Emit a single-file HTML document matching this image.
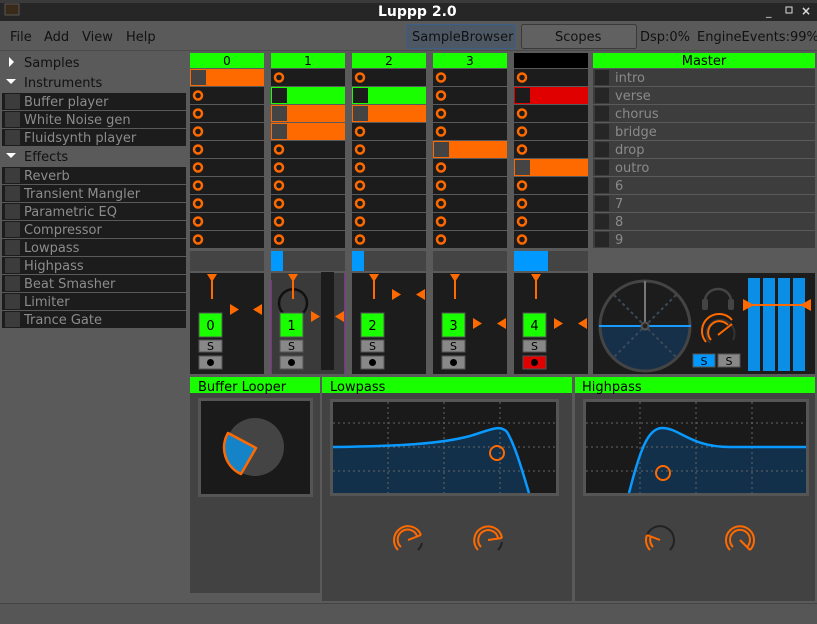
<!DOCTYPE html>
<html><head><meta charset="utf-8"><style>
html,body{margin:0;padding:0;width:817px;height:624px;overflow:hidden;background:#5a5a5a;font-family:"DejaVu Sans","Liberation Sans",sans-serif;}
svg{display:block}
</style></head><body>
<svg width="817" height="624" xmlns="http://www.w3.org/2000/svg" font-family="DejaVu Sans, Liberation Sans, sans-serif">
<defs>
<g id="e"><rect width="74" height="17" fill="#1c1c1c"/><circle cx="8" cy="8.5" r="4" fill="none" stroke="#ff6a00" stroke-width="2.5"/></g>
<g id="m"><rect width="222" height="17" fill="#3d3d3d"/><rect x="2" y="1" width="14" height="15" fill="#262626"/></g>
<g id="li"><rect width="184" height="17" fill="#1c1c1c"/><rect x="3" y="1" width="15" height="15" fill="#3c3c3c"/></g>
</defs>
<!-- title bar -->
<rect width="817" height="21" fill="#262626"/>
<rect x="0" y="0" width="817" height="3" fill="#3a3a3a"/>
<rect x="5" y="4" width="14" height="11" fill="#3a2a1a" stroke="#555"/>
<text x="378" y="16" fill="#fff" font-size="14" font-weight="bold" font-family="DejaVu Sans, sans-serif">Luppp 2.0</text>
<text x="766" y="15" fill="#ddd" font-size="11">_</text>
<rect x="786" y="7" width="6" height="6" fill="none" stroke="#ddd"/>
<text x="801" y="15" fill="#ddd" font-size="12" font-weight="bold">×</text>
<!-- menu -->
<rect x="0" y="22" width="817" height="28" fill="#5a5a5a"/>
<text x="10" y="41" font-size="13" fill="#111">File</text>
<text x="44" y="41" font-size="13" fill="#111">Add</text>
<text x="82" y="41" font-size="13" fill="#111">View</text>
<text x="126" y="41" font-size="13" fill="#111">Help</text>
<rect x="406.5" y="24.5" width="109" height="24" rx="2" fill="#4e5864" stroke="#3a5f8a"/>
<text x="412" y="41" font-size="13" fill="#111">SampleBrowser</text>
<rect x="521.5" y="24.5" width="115" height="24" rx="2" fill="#616161" stroke="#3a3a3a"/>
<text x="555" y="41" font-size="13" fill="#111">Scopes</text>
<text x="640" y="41" font-size="13" fill="#111">Dsp:0%</text>
<text x="697" y="41" font-size="13" fill="#111">EngineEvents:99%</text>
<line x1="0" y1="50.5" x2="817" y2="50.5" stroke="#4a4a4a"/>
<!-- left tree -->
<polygon points="9,57 9,67 14,62" fill="#fff"/>
<text x="24" y="67" font-size="13" fill="#111">Samples</text>
<polygon points="6,79 16,79 11,84" fill="#fff"/>
<text x="24" y="87" font-size="13" fill="#111">Instruments</text>
<use href="#li" x="2" y="93"/><text x="24" y="106" font-size="13" fill="#8c8c8c">Buffer player</text>
<use href="#li" x="2" y="111"/><text x="24" y="124" font-size="13" fill="#8c8c8c">White Noise gen</text>
<use href="#li" x="2" y="129"/><text x="24" y="142" font-size="13" fill="#8c8c8c">Fluidsynth player</text>
<polygon points="6,153 16,153 11,158" fill="#fff"/>
<text x="24" y="161" font-size="13" fill="#111">Effects</text>
<use href="#li" x="2" y="167"/><text x="24" y="180" font-size="13" fill="#8c8c8c">Reverb</text>
<use href="#li" x="2" y="185"/><text x="24" y="198" font-size="13" fill="#8c8c8c">Transient Mangler</text>
<use href="#li" x="2" y="203"/><text x="24" y="216" font-size="13" fill="#8c8c8c">Parametric EQ</text>
<use href="#li" x="2" y="221"/><text x="24" y="234" font-size="13" fill="#8c8c8c">Compressor</text>
<use href="#li" x="2" y="239"/><text x="24" y="252" font-size="13" fill="#8c8c8c">Lowpass</text>
<use href="#li" x="2" y="257"/><text x="24" y="270" font-size="13" fill="#8c8c8c">Highpass</text>
<use href="#li" x="2" y="275"/><text x="24" y="288" font-size="13" fill="#8c8c8c">Beat Smasher</text>
<use href="#li" x="2" y="293"/><text x="24" y="306" font-size="13" fill="#8c8c8c">Limiter</text>
<use href="#li" x="2" y="311"/><text x="24" y="324" font-size="13" fill="#8c8c8c">Trance Gate</text>
<!-- track headers -->
<g font-size="12" text-anchor="middle" fill="#000">
<rect x="190" y="53" width="74" height="15" fill="#1aff00"/><text x="227" y="65">0</text>
<rect x="271" y="53" width="74" height="15" fill="#1aff00"/><text x="308" y="65">1</text>
<rect x="352" y="53" width="74" height="15" fill="#1aff00"/><text x="389" y="65">2</text>
<rect x="433" y="53" width="74" height="15" fill="#1aff00"/><text x="470" y="65">3</text>
<rect x="514" y="53" width="74" height="15" fill="#000"/>
<rect x="593" y="53" width="222" height="15" fill="#1aff00"/><text x="704" y="65" font-size="13">Master</text>
</g>
<!-- clips col0 -->
<rect x="190" y="69" width="74" height="17" fill="#ff6a00"/><rect x="191" y="70" width="15" height="15" fill="#444"/>
<use href="#e" x="190" y="87"/><use href="#e" x="190" y="105"/><use href="#e" x="190" y="123"/><use href="#e" x="190" y="141"/><use href="#e" x="190" y="159"/><use href="#e" x="190" y="177"/><use href="#e" x="190" y="195"/><use href="#e" x="190" y="213"/><use href="#e" x="190" y="231"/>
<!-- col1 -->
<use href="#e" x="271" y="69"/>
<rect x="271" y="87" width="74" height="17" fill="#1aff00"/><rect x="272" y="88" width="15" height="15" fill="#1c1c1c"/>
<rect x="271" y="105" width="74" height="17" fill="#ff6a00"/><rect x="272" y="106" width="15" height="15" fill="#444"/>
<rect x="271" y="123" width="74" height="17" fill="#ff6a00"/><rect x="272" y="124" width="15" height="15" fill="#444"/>
<use href="#e" x="271" y="141"/><use href="#e" x="271" y="159"/><use href="#e" x="271" y="177"/><use href="#e" x="271" y="195"/><use href="#e" x="271" y="213"/><use href="#e" x="271" y="231"/>
<!-- col2 -->
<use href="#e" x="352" y="69"/>
<rect x="352" y="87" width="74" height="17" fill="#1aff00"/><rect x="353" y="88" width="15" height="15" fill="#1c1c1c"/>
<rect x="352" y="105" width="74" height="17" fill="#ff6a00"/><rect x="353" y="106" width="15" height="15" fill="#444"/>
<use href="#e" x="352" y="123"/><use href="#e" x="352" y="141"/><use href="#e" x="352" y="159"/><use href="#e" x="352" y="177"/><use href="#e" x="352" y="195"/><use href="#e" x="352" y="213"/><use href="#e" x="352" y="231"/>
<!-- col3 -->
<use href="#e" x="433" y="69"/><use href="#e" x="433" y="87"/><use href="#e" x="433" y="105"/><use href="#e" x="433" y="123"/>
<rect x="433" y="141" width="74" height="17" fill="#ff6a00"/><rect x="434" y="142" width="15" height="15" fill="#444"/>
<use href="#e" x="433" y="159"/><use href="#e" x="433" y="177"/><use href="#e" x="433" y="195"/><use href="#e" x="433" y="213"/><use href="#e" x="433" y="231"/>
<!-- col4 -->
<use href="#e" x="514" y="69"/>
<rect x="514" y="87" width="74" height="17" fill="#e00000"/><rect x="515" y="88" width="15" height="15" fill="#1c1c1c"/>
<use href="#e" x="514" y="105"/><use href="#e" x="514" y="123"/><use href="#e" x="514" y="141"/>
<rect x="514" y="159" width="74" height="17" fill="#ff6a00"/><rect x="515" y="160" width="15" height="15" fill="#444"/>
<use href="#e" x="514" y="177"/><use href="#e" x="514" y="195"/><use href="#e" x="514" y="213"/><use href="#e" x="514" y="231"/>
<!-- master scenes -->
<g font-size="13" fill="#8a8a8a">
<use href="#m" x="593" y="69"/><text x="615" y="82">intro</text>
<use href="#m" x="593" y="87"/><text x="615" y="100">verse</text>
<use href="#m" x="593" y="105"/><text x="615" y="118">chorus</text>
<use href="#m" x="593" y="123"/><text x="615" y="136">bridge</text>
<use href="#m" x="593" y="141"/><text x="615" y="154">drop</text>
<use href="#m" x="593" y="159"/><text x="615" y="172">outro</text>
<use href="#m" x="593" y="177"/><text x="615" y="190">6</text>
<use href="#m" x="593" y="195"/><text x="615" y="208">7</text>
<use href="#m" x="593" y="213"/><text x="615" y="226">8</text>
<use href="#m" x="593" y="231"/><text x="615" y="244">9</text>
</g>
<!-- progress row -->
<rect x="190" y="251" width="74" height="20" fill="#444"/>
<rect x="271" y="251" width="74" height="20" fill="#444"/><rect x="271" y="251" width="12" height="20" fill="#0099ff"/>
<rect x="352" y="251" width="74" height="20" fill="#444"/><rect x="352" y="251" width="12" height="20" fill="#0099ff"/>
<rect x="433" y="251" width="74" height="20" fill="#444"/>
<rect x="514" y="251" width="74" height="20" fill="#444"/><rect x="514" y="251" width="34" height="20" fill="#0099ff"/>
<!-- lower track areas -->
<rect x="190" y="273" width="74" height="101" fill="#1c1c1c"/>
<rect x="271" y="273" width="74" height="101" fill="#3a3a3a"/>
<line x1="271.5" y1="280" x2="271.5" y2="374" stroke="#8a2a9a"/><line x1="344.5" y1="273" x2="344.5" y2="374" stroke="#8a2a9a"/>
<rect x="321" y="272" width="13" height="98" fill="#1c1c1c"/>
<rect x="352" y="273" width="74" height="101" fill="#1c1c1c"/>
<rect x="433" y="273" width="74" height="101" fill="#1c1c1c"/>
<rect x="514" y="273" width="74" height="101" fill="#1c1c1c"/>
<path d="M283 313 A14 14 0 1 1 303 313" fill="none" stroke="#111" stroke-width="2.5"/>
<g fill="#ff6a00" stroke="#ff6a00" stroke-width="2">
<polygon points="207,274 217,274 212,282" stroke="none"/><line x1="212" y1="280" x2="212" y2="299"/>
<polygon points="288,274 298,274 293,282" stroke="none"/><line x1="293" y1="280" x2="293" y2="299"/>
<polygon points="369,274 379,274 374,282" stroke="none"/><line x1="374" y1="280" x2="374" y2="299"/>
<polygon points="450,274 460,274 455,282" stroke="none"/><line x1="455" y1="280" x2="455" y2="299"/>
<polygon points="531,274 541,274 536,282" stroke="none"/><line x1="536" y1="280" x2="536" y2="299"/>
</g>
<g fill="#ff6a00">
<polygon points="230,304 230,315 239,309.5"/><polygon points="262,304 262,315 253,309.5"/>
<polygon points="311,311 311,322 320,316.5"/><polygon points="344,311 344,322 335,316.5"/>
<polygon points="392,289 392,300 401,294.5"/><polygon points="425,289 425,300 416,294.5"/>
<polygon points="473,318 473,329 482,323.5"/><polygon points="506,318 506,329 497,323.5"/>
<polygon points="554,318 554,329 563,323.5"/><polygon points="587,318 587,329 578,323.5"/>
</g>
<g font-size="13" text-anchor="middle">
<rect x="199" y="313" width="23" height="24" fill="#1aff00" stroke="#555"/><text x="210.5" y="330">0</text>
<rect x="280" y="313" width="23" height="24" fill="#1aff00" stroke="#555"/><text x="291.5" y="330">1</text>
<rect x="361" y="313" width="23" height="24" fill="#1aff00" stroke="#555"/><text x="372.5" y="330">2</text>
<rect x="442" y="313" width="23" height="24" fill="#1aff00" stroke="#555"/><text x="453.5" y="330">3</text>
<rect x="523" y="313" width="23" height="24" fill="#1aff00" stroke="#555"/><text x="534.5" y="330">4</text>
</g>
<g font-size="11" text-anchor="middle">
<rect x="199" y="340" width="23" height="12" fill="#888" stroke="#555"/><text x="210.5" y="350">S</text>
<rect x="280" y="340" width="23" height="12" fill="#888" stroke="#555"/><text x="291.5" y="350">S</text>
<rect x="361" y="340" width="23" height="12" fill="#888" stroke="#555"/><text x="372.5" y="350">S</text>
<rect x="442" y="340" width="23" height="12" fill="#888" stroke="#555"/><text x="453.5" y="350">S</text>
<rect x="523" y="340" width="23" height="12" fill="#888" stroke="#555"/><text x="534.5" y="350">S</text>
</g>
<rect x="199" y="356" width="23" height="13" fill="#888" stroke="#555"/><circle cx="210.5" cy="362.5" r="3.5"/>
<rect x="280" y="356" width="23" height="13" fill="#888" stroke="#555"/><circle cx="291.5" cy="362.5" r="3.5"/>
<rect x="361" y="356" width="23" height="13" fill="#888" stroke="#555"/><circle cx="372.5" cy="362.5" r="3.5"/>
<rect x="442" y="356" width="23" height="13" fill="#888" stroke="#555"/><circle cx="453.5" cy="362.5" r="3.5"/>
<rect x="523" y="356" width="23" height="13" fill="#e00000" stroke="#555"/><circle cx="534.5" cy="362.5" r="3.5"/>
<!-- master lower -->
<rect x="593" y="273" width="222" height="101" fill="#1c1c1c"/>
<path d="M600 326 A45 45 0 0 0 690 326 Z" fill="#163049"/>
<g stroke="#3a4a5a" stroke-width="2" stroke-dasharray="3,3"><line x1="614" y1="295" x2="676" y2="357"/><line x1="676" y1="295" x2="614" y2="357"/></g>
<circle cx="645" cy="326" r="45" fill="none" stroke="#444" stroke-width="3"/>
<line x1="599" y1="326" x2="691" y2="326" stroke="#1a9aff" stroke-width="2"/>
<line x1="645" y1="281" x2="645" y2="326" stroke="#777" stroke-width="2"/>
<circle cx="645" cy="326" r="3.5" fill="#222" stroke="#555" stroke-width="2"/>
<path d="M705 307 v-6 a13 12 0 0 1 26 0 v6" fill="none" stroke="#444" stroke-width="2.5"/>
<rect x="702" y="299" width="6" height="11" rx="2" fill="#444"/><rect x="728" y="299" width="6" height="11" rx="2" fill="#444"/>
<path d="M710 343 A14 14 0 1 1 733 340" fill="none" stroke="#333" stroke-width="2"/>
<path d="M706 342 A16 16 0 0 1 732 320" fill="none" stroke="#ff6a00" stroke-width="2"/>
<path d="M711 340 A11 11 0 0 1 728 325" fill="none" stroke="#ff6a00" stroke-width="2"/>
<line x1="718" y1="335" x2="732" y2="324" stroke="#ff6a00" stroke-width="2"/>
<g font-size="11" text-anchor="middle">
<rect x="693" y="354" width="22" height="13" fill="#0099ff" stroke="#555"/><text x="704" y="365">S</text>
<rect x="718" y="354" width="22" height="13" fill="#888" stroke="#555"/><text x="729" y="365">S</text>
</g>
<rect x="748" y="278" width="12" height="93" fill="#0a8ee6"/><rect x="763" y="278" width="12" height="93" fill="#0a8ee6"/><rect x="778" y="278" width="12" height="93" fill="#0a8ee6"/><rect x="793" y="278" width="12" height="93" fill="#0a8ee6"/>
<line x1="748" y1="305" x2="808" y2="305" stroke="#ff6a00" stroke-width="2"/>
<polygon points="743,299 743,311 754,305" fill="#ff6a00"/><polygon points="811,299 811,311 800,305" fill="#ff6a00"/>
<!-- bottom panels -->
<rect x="190" y="377" width="130" height="216" fill="#424242"/>
<rect x="322" y="377" width="250" height="224" fill="#424242"/>
<rect x="575" y="377" width="240" height="224" fill="#424242"/>
<g font-size="13" fill="#000">
<rect x="190" y="377" width="130" height="16" fill="#1aff00"/><text x="198" y="391">Buffer Looper</text>
<rect x="322" y="377" width="250" height="16" fill="#1aff00"/><text x="330" y="391">Lowpass</text>
<rect x="575" y="377" width="240" height="16" fill="#1aff00"/><text x="582" y="391">Highpass</text>
</g>
<rect x="199.5" y="399.5" width="112" height="96" fill="#1a1a1a" stroke="#555" stroke-width="3"/>
<circle cx="255" cy="447" r="29" fill="#444"/>
<path d="M256 448 L228 433 A29 29 0 0 0 241 474 Z" fill="#1583c8" stroke="#ff6a00" stroke-width="2.5" stroke-linejoin="round"/>
<!-- lowpass graph -->
<rect x="331.5" y="400.5" width="226" height="94" fill="#1a1a1a" stroke="#555" stroke-width="3"/>
<path d="M333 447 C400 446 440 444 470 436 C490 430 500 424 507 432 C515 445 522 470 529 493 L333 493 Z" fill="#13304a"/>
<g stroke="#666" stroke-dasharray="2,3"><line x1="388" y1="402" x2="388" y2="493"/><line x1="444" y1="402" x2="444" y2="493"/><line x1="500" y1="402" x2="500" y2="493"/><line x1="333" y1="423" x2="556" y2="423"/><line x1="333" y1="447" x2="556" y2="447"/><line x1="333" y1="471" x2="556" y2="471"/></g>
<path d="M333 447 C400 446 440 444 470 436 C490 430 500 424 507 432 C515 445 522 470 529 493" fill="none" stroke="#0a9aff" stroke-width="2.5"/>
<circle cx="497" cy="453" r="7" fill="none" stroke="#ff6a00" stroke-width="2"/>
<!-- highpass graph -->
<rect x="584.5" y="400.5" width="223" height="94" fill="#1a1a1a" stroke="#555" stroke-width="3"/>
<path d="M629 493 C640 450 648 428 662 428 C680 428 690 447 730 447 L806 447 L806 493 Z" fill="#13304a"/>
<g stroke="#666" stroke-dasharray="2,3"><line x1="640" y1="402" x2="640" y2="493"/><line x1="696" y1="402" x2="696" y2="493"/><line x1="752" y1="402" x2="752" y2="493"/><line x1="586" y1="423" x2="806" y2="423"/><line x1="586" y1="447" x2="806" y2="447"/><line x1="586" y1="471" x2="806" y2="471"/></g>
<path d="M629 493 C640 450 648 428 662 428 C680 428 690 447 730 447 L806 447" fill="none" stroke="#0a9aff" stroke-width="2.5"/>
<circle cx="663" cy="473" r="7" fill="none" stroke="#ff6a00" stroke-width="2"/>
<!-- knobs -->
<g fill="none" stroke-width="2">
<path d="M422 543 A14 14 0 0 1 418 550" stroke="#222"/>
<path d="M398 550 A14 14 0 1 1 421 535" stroke="#ff6a00"/><path d="M401 547 A10 10 0 1 1 417 536" stroke="#ff6a00"/>
<line x1="408" y1="540" x2="421" y2="535" stroke="#ff6a00"/>
<path d="M502 542 A14 14 0 0 1 498 550" stroke="#222"/>
<path d="M478 550 A14 14 0 1 1 502 538" stroke="#ff6a00"/><path d="M481 547 A10 10 0 1 1 498 538" stroke="#ff6a00"/>
<line x1="488" y1="540" x2="502" y2="538" stroke="#ff6a00"/>
<path d="M647 535 A14 14 0 1 1 670 550" stroke="#222"/>
<path d="M650 550 A14 14 0 0 1 647 535" stroke="#ff6a00"/><path d="M653 547 A10 10 0 0 1 651 536" stroke="#ff6a00"/>
<line x1="660" y1="540" x2="647" y2="535" stroke="#ff6a00"/>
<path d="M730 550 A14 14 0 1 1 750 550" stroke="#ff6a00"/><path d="M733 547 A10 10 0 1 1 747 547" stroke="#ff6a00"/>
<line x1="740" y1="540" x2="750" y2="550" stroke="#ff6a00"/>
</g>
<!-- status bar -->
<line x1="0" y1="603.5" x2="817" y2="603.5" stroke="#444"/>
<rect x="0" y="604" width="817" height="20" fill="#565656"/>
</svg>
</body></html>
